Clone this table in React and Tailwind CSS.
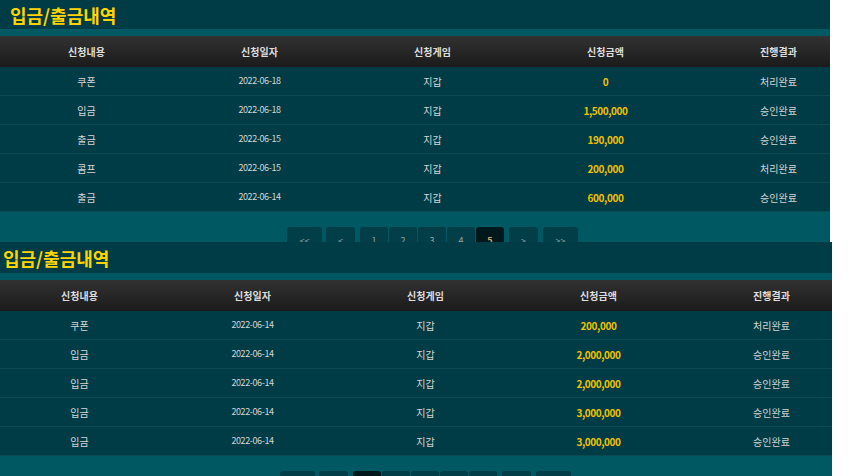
import React from 'react';

const cols = ['신청내용', '신청일자', '신청게임', '신청금액', '진행결과'];

const firstRows = [
  ['쿠폰', '2022-06-18', '지갑', '0', '처리완료'],
  ['입금', '2022-06-18', '지갑', '1,500,000', '승인완료'],
  ['출금', '2022-06-15', '지갑', '190,000', '승인완료'],
  ['콤프', '2022-06-15', '지갑', '200,000', '처리완료'],
  ['출금', '2022-06-14', '지갑', '600,000', '승인완료'],
];

const secondRows = [
  ['쿠폰', '2022-06-14', '지갑', '200,000', '처리완료'],
  ['입금', '2022-06-14', '지갑', '2,000,000', '승인완료'],
  ['입금', '2022-06-14', '지갑', '2,000,000', '승인완료'],
  ['입금', '2022-06-14', '지갑', '3,000,000', '승인완료'],
  ['입금', '2022-06-14', '지갑', '3,000,000', '승인완료'],
];

function Pager({ active }) {
  const btn = 'h-[28px] flex items-start justify-center pt-[7px] rounded-t-[3px] text-[9px] text-[#8fa5a8]';
  return (
    <div className="flex justify-center pt-[15px]">
      <div className={`${btn} w-[35px] bg-[#013e47]`}>&lt;&lt;</div>
      <div className={`${btn} w-[29px] ml-[4px] bg-[#013e47]`}>&lt;</div>
      <div className="flex gap-px ml-[5px]">
        {[1, 2, 3, 4, 5].map((n) => (
          <div
            key={n}
            className={`${btn} w-[28px] ${n === active ? 'bg-[#00181b] text-[#c9a962] font-bold' : 'bg-[#013e47]'}`}
          >
            {n}
          </div>
        ))}
      </div>
      <div className={`${btn} w-[29px] ml-[5px] bg-[#013e47]`}>&gt;</div>
      <div className={`${btn} w-[35px] ml-[5px] bg-[#013e47]`}>&gt;&gt;</div>
    </div>
  );
}

function Panel({ rows, active, shift, titleH, width, height }) {
  return (
    <div className="overflow-hidden bg-[#005863]" style={{ width, height }}>
      <div className="w-[865px]" style={{ marginLeft: shift }}>
        <div className="bg-[#003c45] flex items-center pl-[10px]" style={{ height: titleH }}>
          <h2 className="text-[18px] font-bold text-[#ffd400] leading-none">입금/출금내역</h2>
        </div>
        <div className="h-[7px] bg-[#005863]" />
        <div className="grid grid-cols-5 h-[31px] items-center bg-gradient-to-b from-[#323232] to-[#1b1b1b]">
          {cols.map((c) => (
            <div key={c} className="text-center text-[10px] font-bold text-[#dedede]">{c}</div>
          ))}
        </div>
        {rows.map((r, i) => (
          <div key={i} className="grid grid-cols-5 h-[29px] items-center bg-[#003c45] border-b border-[#0c4a52]">
            {r.map((v, j) => (
              <div
                key={j}
                className={`text-center ${
                  j === 3
                    ? 'text-[10px] font-bold text-[#f0c000] tracking-[-0.4px]'
                    : j === 1
                    ? 'text-[9px] text-[#d2d6d6] tracking-[-0.4px]'
                    : 'text-[10px] text-[#d2d6d6]'
                }`}
              >
                {v}
              </div>
            ))}
          </div>
        ))}
        <Pager active={active} />
      </div>
    </div>
  );
}

export default function App() {
  return (
    <div className="w-[850px] h-[476px] bg-white overflow-hidden" style={{ fontFamily: '"Noto Sans CJK KR", "Noto Sans", sans-serif' }}>
      <Panel rows={firstRows} active={5} shift={0} titleH={29} width={830} height={242} />
      <Panel rows={secondRows} active={1} shift={-7} titleH={31} width={832} height={234} />
    </div>
  );
}
